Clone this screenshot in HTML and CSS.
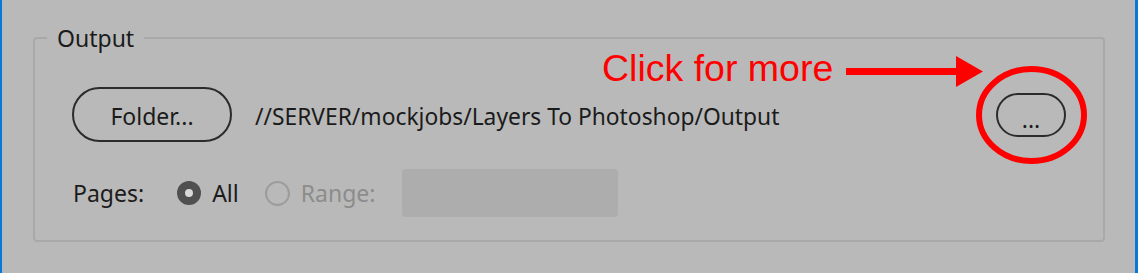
FILE: index.html
```html
<!DOCTYPE html>
<html lang="en">

<head>
  <meta charset="UTF-8">
  <title>Output</title>
  <link rel="stylesheet" href="styles.css">
</head>

<body>
  <div class="panel">
    <fieldset class="output">
      <legend>Output</legend>

      <div class="row folder-row">
        <button class="pill folder-btn">Folder...</button>
        <span class="path">//SERVER/mockjobs/Layers To Photoshop/Output</span>
        <button class="pill more-btn">...</button>
      </div>

      <div class="row pages-row">
        <span class="label">Pages:</span>
        <label class="radio checked"><span class="dot"></span>All</label>
        <label class="radio disabled"><span class="dot"></span>Range:</label>
        <input class="range" type="text" disabled>
      </div>
    </fieldset>
  </div>

  <!-- annotation drawn over the dialog -->
  <div class="callout">Click for more</div>
  <svg class="marks" width="1138" height="273" viewBox="0 0 1138 273">
    <rect x="846" y="68" width="112" height="7" fill="#ff0000" />
    <polygon points="956,56 983,71.5 956,87" fill="#ff0000" />
    <ellipse cx="1031.5" cy="115" rx="52.5" ry="46" fill="none" stroke="#ff0000" stroke-width="6" />
  </svg>
</body>

</html>
```

FILE: styles.css
```css
body {
  margin: 0;
  height: 273px;
  background: #b9b9b9;
  font-family: "Noto Sans", "Open Sans", sans-serif;
  color: #1b1b1b;
  overflow: hidden;
}

.panel {
  height: 273px;
  border-left: 2px solid #0a78d7;
  border-right: 3px solid #0a78d7;
  box-sizing: border-box;
  padding: 23px 30px 0 31px;
}

.output {
  margin: 0;
  border: 2px solid #a9a9a9;
  border-radius: 4px;
  padding: 34px 37px 23px 37px;
}

.output legend {
  margin-left: -25px;
  padding: 0 10px;
  font-size: 23px;
  line-height: 30px;
}

.row {
  display: flex;
  align-items: center;
}

.pill {
  font-family: inherit;
  font-size: 23px;
  color: #1b1b1b;
  background: transparent;
  border: 2px solid #2b2b2b;
  border-radius: 30px;
  cursor: pointer;
}

.folder-btn {
  width: 160px;
  height: 55px;
  padding-top: 3px;
}

.path {
  margin-left: 23px;
  padding-top: 3px;
  font-size: 22.8px;
  flex: 1;
}

.more-btn {
  width: 70px;
  height: 44px;
  line-height: 1;
  padding-top: 11px;
}

.pages-row {
  margin-top: 27px;
  padding-left: 1px;
  font-size: 23px;
}

.label {
  margin-right: 33px;
}

.radio {
  display: flex;
  align-items: center;
  gap: 11px;
  margin-right: 26px;
}

.radio .dot {
  width: 24px;
  height: 24px;
  border-radius: 50%;
  box-sizing: border-box;
}

.radio.checked .dot {
  border: 8px solid #505050;
  background: #d8d8d8;
}

.radio.disabled {
  color: #8c8c8c;
  margin-right: 27px;
}

.radio.disabled .dot {
  width: 25px;
  height: 25px;
  border: 2px solid #9c9c9c;
}

.range {
  width: 216px;
  height: 48px;
  box-sizing: border-box;
  border: none;
  border-radius: 4px;
  background: #adadad;
}

.callout {
  position: absolute;
  left: 602px;
  top: 44px;
  font-family: "Liberation Sans", Arial, sans-serif;
  font-size: 37.5px;
  line-height: 48px;
  color: #ff0000;
}

.marks {
  position: absolute;
  left: 0;
  top: 0;
  pointer-events: none;
}
```
